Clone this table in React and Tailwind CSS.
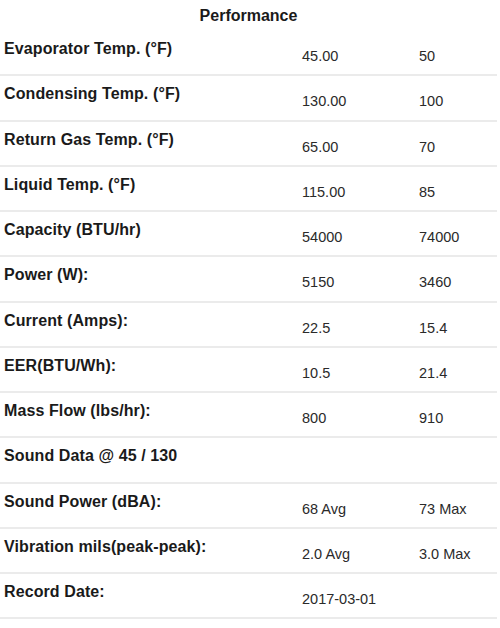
const rows = [
    ['Evaporator Temp. (°F)', '45.00', '50'],
    ['Condensing Temp. (°F)', '130.00', '100'],
    ['Return Gas Temp. (°F)', '65.00', '70'],
    ['Liquid Temp. (°F)', '115.00', '85'],
    ['Capacity (BTU/hr)', '54000', '74000'],
    ['Power (W):', '5150', '3460'],
    ['Current (Amps):', '22.5', '15.4'],
    ['EER(BTU/Wh):', '10.5', '21.4'],
    ['Mass Flow (lbs/hr):', '800', '910'],
    ['Sound Data @ 45 / 130', '', ''],
    ['Sound Power (dBA):', '68 Avg', '73 Max'],
    ['Vibration mils(peak-peak):', '2.0 Avg', '3.0 Max'],
    ['Record Date:', '2017-03-01', ''],
];

export default function App() {
    return (
        <div className="w-[500px] h-[628px] bg-white overflow-hidden font-['Liberation_Sans',Arial,sans-serif]">
            <div className="w-[497px]">
                {/* title */}
                <div className="h-[31px] flex items-center justify-center text-[16px] font-bold text-[#1a1a1a]">
                    Performance
                </div>

                {rows.map(([label, a, b], i) => (
                    <div
                        key={i}
                        className="flex h-[45.25px] border-b-2 border-[#ebebeb]"
                    >
                        <div className="w-[298px] pl-[4px] pt-[6px] text-[16px] font-bold text-[#1a1a1a] tracking-[0.1px]">
                            {label}
                        </div>
                        <div className="w-[116px] pl-[4px] pt-[15px] text-[14.5px] text-[#2a2a2a]">
                            {a}
                        </div>
                        <div className="flex-1 pl-[5px] pt-[15px] text-[14.5px] text-[#2a2a2a]">
                            {b}
                        </div>
                    </div>
                ))}
            </div>
        </div>
    );
}
